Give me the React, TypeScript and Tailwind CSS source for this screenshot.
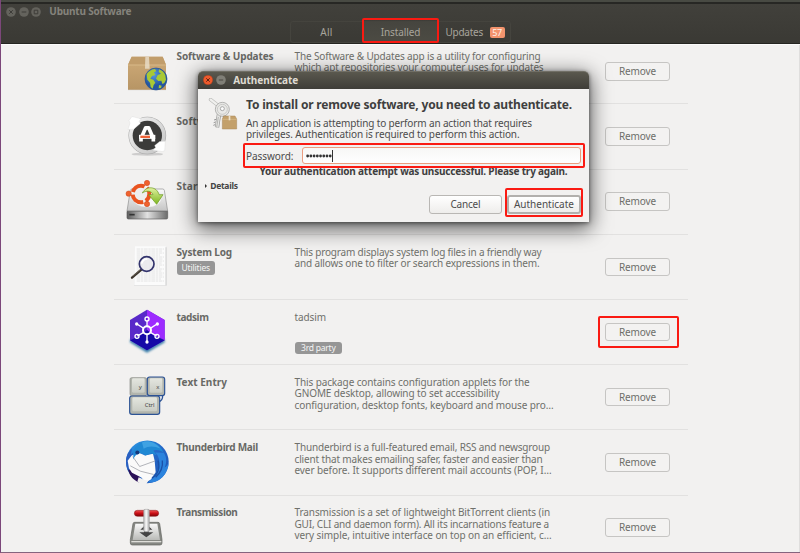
import React, { useLayoutEffect, useRef, useState } from 'react';

/* Single line of text tracked so that it fills the given width. */
function Line({ w, className = '', children }: { w: number; className?: string; children: string }) {
  const ref = useRef<HTMLSpanElement>(null);
  const [spacing, setSpacing] = useState(0);
  useLayoutEffect(() => {
    if (ref.current) {
      const natural = ref.current.getBoundingClientRect().width;
      setSpacing((w - natural) / children.length);
    }
  }, []);
  return (
    <span className={`block whitespace-nowrap ${className}`}>
      <span ref={ref} className="inline-block" style={{ letterSpacing: spacing }}>
        {children}
      </span>
    </span>
  );
}

function PackageIcon() {
  return (
    <svg viewBox="39 22 144 144" className="size-12">
      <defs>
        <linearGradient id="box" x1="0" y1="0" x2="0" y2="1">
          <stop offset="0" stopColor="#cfab78" />
          <stop offset="1" stopColor="#b79565" />
        </linearGradient>
        <radialGradient id="sea" cx=".4" cy=".3">
          <stop offset="0" stopColor="#5a9ae0" />
          <stop offset="1" stopColor="#2456a0" />
        </radialGradient>
      </defs>
      <path d="M54 151h114v4H54z" fill="#ccc" opacity=".6" />
      <path d="M65 54h93l10 24v75H54V78z" fill="url(#box)" />
      <path d="M65 54h93l10 24H54z" fill="#c19d6b" />
      <path d="M54 79h114" stroke="#e0c496" strokeWidth="2" />
      <path d="M106 54h11l2 36h-14z" fill="#eadfca" opacity=".8" />
      <circle cx="138" cy="121" r="33" fill="url(#sea)" stroke="#23508f" strokeWidth="2" />
      <path d="M110 107c5-9 14-15 25-16l4 7-7 3 4 8-10 3-5 8 9 3 6 9-5 7-3 11-6-5-2-13-8-9z" fill="#a9c934" />
      <path d="M147 92c9 3 16 9 19 18l2 13-5 10-6 3-3-10-9 1-7-7 5-11 10-4-7-5z" fill="#a9c934" />
      <path d="m147 139 8 2-2 7-7 1z" fill="#a9c934" />
    </svg>
  );
}

function UpdaterIcon() {
  return (
    <svg viewBox="39 217.5 144 144" className="size-12">
      <defs>
        <linearGradient id="ring" x1="0" y1="0" x2="1" y2="1">
          <stop offset="0" stopColor="#f2f2f2" />
          <stop offset="1" stopColor="#c4c4c4" />
        </linearGradient>
      </defs>
      <ellipse cx="112" cy="347" rx="47" ry="5" fill="#aaa" opacity=".5" />
      <circle cx="112" cy="291" r="49" fill="none" stroke="#a2a2a2" strokeWidth="15" />
      <circle cx="112" cy="291" r="49" fill="none" stroke="url(#ring)" strokeWidth="12" />
      <circle cx="112" cy="291" r="44" fill="#3b3b3a" />
      <path d="m57 246 9-12 28 7-7 7 4 7-20 17-17 1 6-19z" fill="#fff" stroke="#d4d4d4" strokeWidth="1" />
      <path d="m166 308-2 29-8 2-27-4 8-7-3-7 15-12z" fill="#fff" stroke="#d4d4d4" strokeWidth="1" />
      <path d="M93 309v-9l14-32h9l14 32v9" fill="none" stroke="#fff" strokeWidth="11" strokeLinejoin="round" />
      <path d="M87 295h49" stroke="#fff" strokeWidth="12" />
      <path d="M91 295h29" stroke="#ee6338" strokeWidth="7" />
    </svg>
  );
}

function StartupDiskIcon() {
  return (
    <svg viewBox="39 413 144 144" className="size-12">
      <defs>
        <linearGradient id="disk" x1="0" y1="0" x2="0" y2="1">
          <stop offset="0" stopColor="#fafafa" />
          <stop offset="1" stopColor="#c4c4c4" />
        </linearGradient>
        <linearGradient id="front" x1="0" y1="0" x2="1" y2="0">
          <stop offset="0" stopColor="#5c5c5c" />
          <stop offset=".5" stopColor="#e2e2e2" />
          <stop offset="1" stopColor="#6b6b6b" />
        </linearGradient>
        <linearGradient id="arrow" x1="0" y1="0" x2="0" y2="1">
          <stop offset="0" stopColor="#e1f2a0" />
          <stop offset="1" stopColor="#7bb51e" />
        </linearGradient>
      </defs>
      <path d="M66 449h92q4 0 5 4l10 62H51l10-62q1-4 5-4z" fill="url(#disk)" stroke="#8c8c8c" strokeWidth="2" />
      <path d="M51 516h122v19q0 4-4 4H55q-4 0-4-4z" fill="url(#front)" stroke="#5b5b5b" strokeWidth="2" />
      <path d="M58 526h16" stroke="#333" strokeWidth="5" />
      <ellipse cx="112" cy="477" rx="43" ry="27" fill="#f7f7f7" stroke="#c6c6c6" />
      <circle cx="93" cy="464" r="25" fill="#eee" stroke="#e95420" strokeWidth="12" strokeDasharray="44 8" strokeDashoffset="20" />
      <g fill="#f0622e" stroke="#c9441a" strokeWidth="1.5">
        <circle cx="111" cy="431" r="8" />
        <circle cx="56" cy="463" r="8" />
        <circle cx="111" cy="494" r="8" />
      </g>
      <path d="M97 461c12-23 44-20 50 5h12l-19 29-24-29h13c-3-11-20-14-32-5z" fill="url(#arrow)" stroke="#68971d" strokeWidth="2" />
    </svg>
  );
}

function LogIcon() {
  return (
    <svg viewBox="39 24 144 144" className="size-12">
      <path d="M76 38h94v118H72z" fill="#e5e5e5" />
      <path d="M75 37h92v116H73z" fill="#fbfbfb" />
      <path
        d="M80 45h82M80 51h76M80 57h82M80 63h70M80 69h82M80 75h77M80 81h82M80 87h75M80 93h82M80 99h70M80 105h82M80 111h74M80 117h82M80 123h80M80 129h82M80 135h73M80 141h82"
        stroke="#d2d2d2"
        strokeWidth="1.6"
        strokeDasharray="11 2 7 2"
      />
      <path d="M168 40v114" stroke="#c4c4c4" strokeWidth="2" />
      <path d="m66 131 29-25" stroke="#3a332b" strokeWidth="7" strokeLinecap="round" />
      <path d="m68 127 23-20" stroke="#847a6b" strokeWidth="2" />
      <circle cx="110" cy="90" r="22" fill="#e9e9ed" fillOpacity=".8" stroke="#33346d" strokeWidth="5" />
      <path d="M95 89c2-9 8-14 17-14" fill="none" stroke="#fff" strokeWidth="5" />
    </svg>
  );
}

function TadsimIcon() {
  return (
    <svg viewBox="39 219 144 144" className="size-12">
      <defs>
        <filter id="soft" x="-20%" y="-20%" width="140%" height="140%">
          <feGaussianBlur stdDeviation="3" />
        </filter>
      </defs>
      <path d="m60 315 51 29 53-29v10l-53 31-51-31z" fill="#397da9" filter="url(#soft)" />
      <path d="m111 227 53 31v61l-53 30-51-30v-61z" fill="#5929c9" />
      <path d="m111 227 53 31v61l-53-30z" fill="#9d2bff" />
      <path d="m60 319 30-13 21-18 21 18 32 13-53 30z" fill="#1609a7" />
      <g stroke="#fff" strokeWidth="4" fill="none">
        <path d="M111 260v19M111 300v22M101 283l-20-13M121 283l20-13M101 295l-19 11M121 295l19 11" />
        <circle cx="111" cy="289" r="12" strokeWidth="6" />
        <circle cx="111" cy="255" r="6" />
        <circle cx="81" cy="307" r="6" />
        <circle cx="141" cy="307" r="6" />
      </g>
      <g fill="#fff">
        <circle cx="80" cy="270" r="5" />
        <circle cx="142" cy="270" r="5" />
        <circle cx="111" cy="324" r="5" />
      </g>
    </svg>
  );
}

function KeysCapsIcon() {
  return (
    <svg viewBox="39 25 144 144" className="size-12">
      <defs>
        <linearGradient id="cap" x1="0" y1="0" x2="0" y2="1">
          <stop offset="0" stopColor="#e4e6df" />
          <stop offset="1" stopColor="#c9ccc4" />
        </linearGradient>
      </defs>
      <path d="M158 96c0 12-5 17-13 18" fill="none" stroke="#2c5395" strokeWidth="4" />
      <rect x="60" y="42" width="50" height="54" rx="5" fill="#b2b5ad" stroke="#878a82" strokeWidth="2" />
      <rect x="66" y="44" width="38" height="43" rx="4" fill="url(#cap)" />
      <rect x="112" y="40" width="52" height="56" rx="7" fill="#b2b5ad" stroke="#2c5395" strokeWidth="3.5" />
      <rect x="119" y="44" width="38" height="43" rx="4" fill="url(#cap)" />
      <rect x="59" y="97" width="90" height="55" rx="7" fill="#b2b5ad" stroke="#2c5395" strokeWidth="3.5" />
      <rect x="67" y="101" width="74" height="42" rx="4" fill="url(#cap)" />
      <g fill="#444" fontSize="18" className="font-['Noto_Sans']">
        <text x="86" y="76">y</text>
        <text x="139" y="76">x</text>
        <text x="104" y="131">Ctrl</text>
      </g>
    </svg>
  );
}

function ThunderbirdIcon() {
  return (
    <svg viewBox="39 220.5 144 144" className="size-12">
      <defs>
        <linearGradient id="bird" x1="0" y1="0" x2="1" y2="1">
          <stop offset="0" stopColor="#2a9be6" />
          <stop offset=".5" stopColor="#2568c8" />
          <stop offset="1" stopColor="#1b4fae" />
        </linearGradient>
      </defs>
      <circle cx="112" cy="295" r="64" fill="url(#bird)" />
      <path d="M48 294c0-20 10-32 18-38l-4 18 8-8-8 40-8 16c-4-9-6-18-6-28z" fill="#2a5fc0" />
      <path d="m54 318 13 2 23 20-2 17c-17-6-28-18-34-39z" fill="#2b1158" />
      <path d="M65 276 87 268l18 8 24-5 5 21 3 34-14 22-12 7-8-2-9-11-28-14-9-14-4-22z" fill="#fafafa" />
      <path d="m68 279 21 30 47-17M61 307l30 16 40 10" fill="none" stroke="#8c9099" strokeWidth="2" />
      <path d="m86 341 16 8 14 2-8 11-17-3-9-5z" fill="#f2f1f0" />
      <path d="M70 273c0-25 21-39 43-40 26 2 43 19 48 35-8-8-20-10-31-7l10 14-16-5-18 6c-6-6-14-8-20-5-8 2-13 9-16 17z" fill="#2089d4" />
      <path d="M96 237c14-8 40-2 55 18-17-7-35-9-50 1z" fill="#55b3ed" opacity=".6" />
      <circle cx="82" cy="267" r="6" fill="#16387c" />
      <path d="M136 267c22 23 14 58-22 90 32 2 61-23 62-61-2 6-6 12-12 16 8-17 5-34-3-44z" fill="#2b83dd" />
      <path d="M144 291c7 23-2 42-18 53M157 291c3 23-7 38-20 50" fill="none" stroke="#1a50a7" strokeWidth="4" />
    </svg>
  );
}

function TransmissionIcon() {
  return (
    <svg viewBox="39 416 144 144" className="size-12">
      <defs>
        <linearGradient id="plate" x1="0" y1="0" x2="0" y2="1">
          <stop offset="0" stopColor="#f9f9f9" />
          <stop offset="1" stopColor="#b9bab7" />
        </linearGradient>
        <linearGradient id="handle" x1="0" y1="0" x2="0" y2="1">
          <stop offset="0" stopColor="#f05050" />
          <stop offset=".5" stopColor="#c90f16" />
          <stop offset="1" stopColor="#7f0509" />
        </linearGradient>
        <linearGradient id="stem" x1="0" y1="0" x2="1" y2="0">
          <stop offset="0" stopColor="#b5b5b5" />
          <stop offset=".45" stopColor="#fafafa" />
          <stop offset="1" stopColor="#a5a5a5" />
        </linearGradient>
      </defs>
      <path d="M74 474h70q4 0 5 4l7 48v10q0 6-6 6H67q-6 0-6-6v-10l8-48q1-4 5-4z" fill="#858782" stroke="#5f615c" strokeWidth="2" />
      <path d="M76 478h66l8 49H68z" fill="url(#plate)" />
      <path d="M64 532h90" stroke="#deded9" strokeWidth="4" />
      <path d="m109 479-18 17h11v8H88l21 15 21-15h-14v-8h11z" fill="#444" />
      <rect x="73" y="438" width="73" height="18" rx="9" fill="url(#handle)" stroke="#83191b" strokeWidth="1.5" />
      <rect x="101" y="435" width="17" height="67" rx="4" fill="url(#stem)" stroke="#999" strokeWidth="1.5" />
    </svg>
  );
}

function AuthIcon() {
  return (
    <svg viewBox="40 96 90 96" className="h-8 w-[30px]">
      <path d="m48 101 22 17" stroke="#bcbcba" strokeWidth="11" strokeLinecap="round" />
      <path d="m48 101 22 17" stroke="#f0f0ee" strokeWidth="7" strokeLinecap="round" />
      <path d="m87 143 5 20" stroke="#aaa" strokeWidth="9" />
      <path d="m73 145-6 39" stroke="#989896" strokeWidth="13" />
      <path d="m73 145-6 39" stroke="#e6e6e4" strokeWidth="9" />
      <path d="m64 160-6 2m5 6-6 2m4 6-5 2" stroke="#999" strokeWidth="3" />
      <path d="m71 153-5 31" stroke="#9b9b99" strokeWidth="2" />
      <circle cx="83" cy="130" r="21" fill="#e9e9e7" stroke="#969694" strokeWidth="2" />
      <circle cx="83" cy="130" r="15" fill="none" stroke="#b9b9b7" strokeWidth="2" />
      <circle cx="83" cy="128" r="6" fill="#fbfbfb" stroke="#888" strokeWidth="2" />
      <path d="M87 150h34l5 9v30H83v-30z" fill="#c3a06b" stroke="#a8885a" strokeWidth="1.5" />
      <path d="M83 160h43" stroke="#dabd8d" strokeWidth="2" />
      <path d="M102 150h5v13h-5z" fill="#ece0ca" />
    </svg>
  );
}

type App = { name: string; nameW: number; icon: React.ReactNode; tag?: string; third?: boolean; lines: [string, number][]; marked?: boolean };

const apps: App[] = [
  {
    name: 'Software & Updates', nameW: 97, icon: <PackageIcon />,
    lines: [['The Software & Updates app is a utility for configuring', 246], ['which apt repositories your computer uses for updates', 249]],
  },
  { name: 'Software Updater', nameW: 90, icon: <UpdaterIcon />, lines: [] },
  { name: 'Startup Disk Creator', nameW: 107, icon: <StartupDiskIcon />, lines: [] },
  {
    name: 'System Log', nameW: 55.5, icon: <LogIcon />, tag: 'Utilities',
    lines: [['This program displays system log files in a friendly way', 247], ['and allows one to filter or search expressions in them.', 245]],
  },
  { name: 'tadsim', nameW: 32, icon: <TadsimIcon />, third: true, lines: [['tadsim', 31.5]], marked: true },
  {
    name: 'Text Entry', nameW: 50.5, icon: <KeysCapsIcon />,
    lines: [['This package contains configuration applets for the', 235], ['GNOME desktop, allowing to set accessibility', 205], ['configuration, desktop fonts, keyboard and mouse pro…', 259]],
  },
  {
    name: 'Thunderbird Mail', nameW: 81.5, icon: <ThunderbirdIcon />,
    lines: [['Thunderbird is a full-featured email, RSS and newsgroup', 255.5], ['client that makes emailing safer, faster and easier than', 248], ['ever before. It supports different mail accounts (POP, I…', 257]],
  },
  {
    name: 'Transmission', nameW: 61, icon: <TransmissionIcon />,
    lines: [['Transmission is a set of lightweight BitTorrent clients (in', 255.5], ['GUI, CLI and daemon form). All its incarnations feature a', 254.5], ['very simple, intuitive interface on top on an efficient, c…', 257]],
  },
];

function AppRow({ app }: { app: App }) {
  return (
    <div className="flex h-[65.2px] shrink-0 border-b border-[#e2e1e0]">
      <div className="flex w-[62.5px] items-center pb-[2px] pl-[9px]">{app.icon}</div>
      <div className="w-[118px] pt-[11.8px]">
        <Line w={app.nameW} className="font-bold text-[#686965]">{app.name}</Line>
        {app.tag && (
          <div className="mt-[3.5px] flex h-3.5 w-[38.5px] items-center justify-center rounded-[3px] bg-[#969696] text-[8.5px] leading-none text-[#f4f4f4]">
            <Line w={28.5}>{app.tag}</Line>
          </div>
        )}
      </div>
      <div className="w-[310.5px] pt-[11.8px] text-[#6f706b]">
        {app.lines.map(([text, w]) => (
          <Line key={text} w={w}>{text}</Line>
        ))}
        {app.third && (
          <div className="mt-[19px] flex h-[11.5px] w-[47.5px] items-center justify-center rounded-[3px] bg-[#969696] text-[8.5px] leading-none text-[#f4f4f4]">
            <Line w={34.5}>3rd party</Line>
          </div>
        )}
      </div>
      <div className="flex items-center">
        <div className="relative flex h-[18.5px] w-[65px] items-center justify-center rounded-[3px] border border-[#c6c5c3] bg-[#f3f2f1] text-[#6d6e6a]">
          <Line w={37} className="pt-px">Remove</Line>
          {app.marked && <div className="absolute -left-[8px] -right-[9.5px] -inset-y-[7.5px] rounded-xs border-2 border-[#fa1a12]" />}
        </div>
      </div>
    </div>
  );
}

function DimControl({ kind }: { kind: 'close' | 'min' | 'max' }) {
  return (
    <svg viewBox="0 0 10 10" className="size-2.5">
      <circle cx="5" cy="5" r="4.8" fill="#64635d" />
      {kind === 'close' && <path d="m3.2 3.2 3.6 3.6m0-3.6L3.2 6.8" stroke="#3d3c38" strokeWidth="1" />}
      {kind === 'min' && <path d="M2.7 5h4.6" stroke="#3d3c38" strokeWidth="1" />}
      {kind === 'max' && <path d="M3.2 3.2h3.6v3.6H3.2z" fill="none" stroke="#3d3c38" strokeWidth="1" />}
    </svg>
  );
}

function Dialog() {
  return (
    <div className="absolute left-[196.7px] top-[70.5px] flex h-[151.5px] w-[391.5px] flex-col rounded-t-[5px] bg-[#f2f1f0] shadow-[0_5px_20px_2px_rgba(0,0,0,0.62),0_1px_4px_rgba(0,0,0,0.5)]">
      <div className="flex h-[18.5px] shrink-0 items-center gap-[2.5px] rounded-t-[5px] border-t border-[#716f66] bg-linear-to-b from-[#5a584e] to-[#3e3d38] pl-[5.5px] text-[#dfdbd2]">
        <svg viewBox="0 0 10 10" className="size-2.5">
          <circle cx="5" cy="5" r="4.8" fill="#ee5a2d" stroke="#963719" strokeWidth=".4" />
          <path d="m3.3 3.3 3.4 3.4m0-3.4L3.3 6.7" stroke="#602413" />
        </svg>
        <svg viewBox="0 0 10 10" className="size-2.5">
          <circle cx="5" cy="5" r="4.8" fill="#807f77" />
          <path d="M2.8 5h4.4" stroke="#4a4943" />
        </svg>
        <Line w={65} className="pl-[5px] font-bold">Authenticate</Line>
      </div>
      <div className="flex pt-[7.5px] text-[#4c4c4c]">
        <div className="w-[48.3px] shrink-0 pl-[10.5px] pt-px"><AuthIcon /></div>
        <div>
          <Line w={326} className="mb-[5.5px] text-[12px] leading-[16px] font-bold text-[#3f3f3f]">To install or remove software, you need to authenticate.</Line>
          <Line w={286}>An application is attempting to perform an action that requires</Line>
          <Line w={273.5}>privileges. Authentication is required to perform this action.</Line>
          <div className="relative mt-[6.5px] flex h-[17px] w-[335px] items-center">
            <Line w={47.5} className="w-14 pt-px">Password:</Line>
            <div className="flex h-full grow items-center rounded-[3px] border border-[#eb9d80] bg-linear-to-b from-[#f7f7f6] to-white pl-[3.5px]">
              <svg viewBox="0 0 27 4" className="h-1 w-[26px]">
                {Array.from({ length: 8 }, (_, i) => (
                  <circle key={i} cx={1.7 + i * 3.35} cy="2" r="1.45" fill="#333" />
                ))}
              </svg>
              <span className="h-3 w-px bg-[#333]" />
            </div>
            <div className="absolute -left-[3px] -right-1 -top-1 -bottom-[3.5px] rounded-xs border-2 border-[#fa1a12]" />
          </div>
          <Line w={308} className="pl-[13.5px] pt-[2px] font-bold text-[#3f3f3f]">Your authentication attempt was unsuccessful. Please try again.</Line>
        </div>
      </div>
      <div className="mt-[2.5px] flex items-center gap-[3px] pl-[7.5px] text-[8.5px] font-bold text-[#444]">
        <svg viewBox="0 0 2 4" className="h-1 w-[2px]"><path d="M0 0l2 2-2 2z" fill="#333" /></svg>
        <Line w={27.5}>Details</Line>
      </div>
      <div className="mt-[3.5px] flex justify-end gap-[5px] pr-[8.5px] text-[#4c4c4c]">
        <div className="flex h-[18.5px] w-[73.5px] items-center justify-center rounded-[3px] border border-[#b9b7b4] bg-linear-to-b from-white to-[#eeedeb]">
          <Line w={30} className="pt-px">Cancel</Line>
        </div>
        <div className="relative flex h-[18.5px] w-[73.5px] items-center justify-center rounded-[3px] border-2 border-[#b2b0ad] bg-linear-to-b from-white to-[#eeedeb]">
          <Line w={60} className="pt-px">Authenticate</Line>
          <div className="absolute -left-[4.5px] -right-[4.5px] -top-[9px] -bottom-[5.5px] rounded-xs border-2 border-[#fa1a12]" />
        </div>
      </div>
    </div>
  );
}

export default function App() {
  return (
    <div className="relative flex h-[553px] w-[800px] flex-col overflow-hidden border-b border-l border-b-[#85647e] border-l-[#7c477a] bg-[#f2f1f0] font-['Noto_Sans',sans-serif] text-[10px] leading-[11.4px]">
      <header className="-ml-px flex h-[45px] shrink-0 flex-col border-b border-l border-b-[#fbfbfa] border-l-[#50204a] bg-linear-to-b from-[#42413c] to-[#3a3934]">
        <div className="h-0.5 shrink-0 bg-[#484a43]" />
        <div className="h-0.5 shrink-0 bg-[#272724]" />
        <div className="flex h-[15px] shrink-0 items-center gap-[2.6px] pl-[5px]">
          <DimControl kind="close" />
          <DimControl kind="min" />
          <DimControl kind="max" />
          <Line w={82} className="pl-[5.5px] font-bold text-[#85837c]">Ubuntu Software</Line>
        </div>
        <div className="flex grow items-end border-b border-[#252521] pl-[289px] text-[#a8a59c]">
          <div className="flex h-[22.5px] items-center rounded-[3px] border border-[#45443e]">
            <div className="flex w-[71px] justify-center pt-0.5"><Line w={12.5}>All</Line></div>
            <div className="relative flex h-full w-[77px] items-center justify-center bg-linear-to-b from-[#46453f] to-[#4c4b43]">
              <Line w={39.5} className="pt-0.5">Installed</Line>
              <div className="absolute -top-[3.5px] -bottom-px inset-x-0 rounded-xs border-2 border-[#fa1a12]" />
            </div>
            <div className="flex w-[71px] items-center gap-[6.5px] pl-[6.5px] pt-px">
              <Line w={37.5} className="pt-px">Updates</Line>
              <div className="flex h-[11.5px] w-[15px] items-center justify-center rounded-[2px] bg-[#f2936d] text-[9px] leading-none text-[#fff0e8]"><Line w={9.5}>57</Line></div>
            </div>
          </div>
        </div>
      </header>
      <main className="flex min-h-0 grow flex-col overflow-hidden border-r border-[#dfdedd] pl-[113px] pr-[111px]">
        <div className="-mt-[5.8px] flex flex-col">
          {apps.map((app) => <AppRow key={app.name} app={app} />)}
        </div>
      </main>
      <Dialog />
    </div>
  );
}
